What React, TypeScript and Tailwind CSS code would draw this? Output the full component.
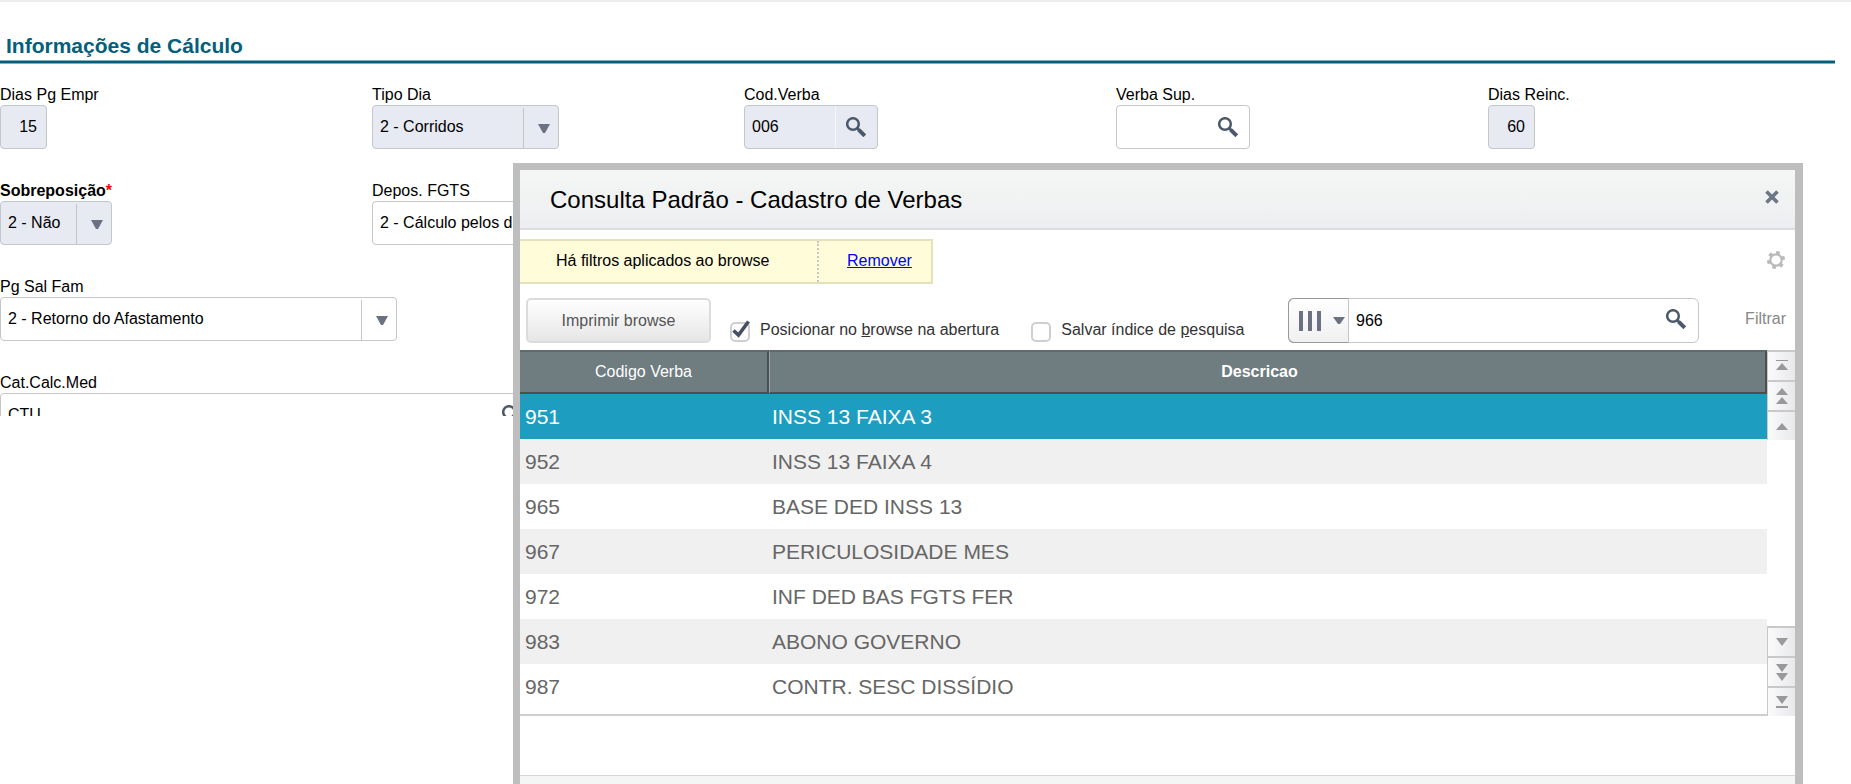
import React, { useState } from 'react';

interface Verba {
  codigo: string;
  descricao: string;
}

const VERBAS: Verba[] = [
  { codigo: '951', descricao: 'INSS 13 FAIXA 3' },
  { codigo: '952', descricao: 'INSS 13 FAIXA 4' },
  { codigo: '965', descricao: 'BASE DED INSS 13' },
  { codigo: '967', descricao: 'PERICULOSIDADE MES' },
  { codigo: '972', descricao: 'INF DED BAS FGTS FER' },
  { codigo: '983', descricao: 'ABONO GOVERNO' },
  { codigo: '987', descricao: 'CONTR. SESC DISSÍDIO' },
];

const SearchIcon = () => (
  <svg width="20" height="20" viewBox="0 0 20 20" fill="none" stroke="#4d586b" className="shrink-0">
    <circle cx="7" cy="7" r="5.8" strokeWidth="2.5" />
    <path d="M11 11L14 14" strokeWidth="3" />
    <path d="M12.8 12.8L18.8 18.8" strokeWidth="4" />
  </svg>
);

const GearIcon = () => (
  <svg width="18" height="18" viewBox="-9 -9 18 18" fill="none" stroke="#b9babd">
    <circle r="5.7" strokeWidth="2.2" />
    {[15, 75, 135, 195, 255, 315].map((a) => (
      <path key={a} d="M0 -6V-9" strokeWidth="3.8" transform={`rotate(${a})`} />
    ))}
  </svg>
);

const Field: React.FC<{ id: string; label: string; required?: boolean; children: React.ReactNode }> = ({ id, label, required, children }) => (
  <div>
    <label htmlFor={id} className={required ? 'block h-5 leading-5 font-bold' : 'block h-5 leading-5'}>
      {label}
      {required && <span className="text-[#f00]">*</span>}
    </label>
    {children}
  </div>
);

const SelectBox: React.FC<{ id: string; value: string; className: string }> = ({ id, value, className }) => (
  <div className={`relative flex h-[44px] rounded border border-[#c3c7c7] ${className}`}>
    <select id={id} className="w-full appearance-none bg-transparent pl-[7px] pr-9 outline-none">
      <option>{value}</option>
    </select>
    <div className="pointer-events-none absolute right-0 bottom-0 top-[2px] flex w-[35px] items-center justify-end border-l border-[#c3c7c7] pr-2">
      <svg width="12" height="9" viewBox="0 0 12 9" fill="#6b7183"><path d="M0 0H12L7 9H5Z" /></svg>
    </div>
  </div>
);

const LookupBox: React.FC<{ id: string; value: string; className: string; divider?: boolean }> = ({ id, value, className, divider }) => (
  <div className={`flex h-[44px] rounded border border-[#c3c7c7] ${className}`}>
    <input id={id} defaultValue={value} className="min-w-0 flex-1 bg-transparent pl-[7px] outline-none" />
    <button type="button" aria-label="Pesquisar" className={`flex w-[42px] items-center border-l pl-[10px] ${divider ? 'border-[#f5f6f9]' : 'border-transparent'}`}>
      <SearchIcon />
    </button>
  </div>
);

const NumberBox: React.FC<{ id: string; value: string }> = ({ id, value }) => (
  <input id={id} defaultValue={value} className="block h-[44px] w-[47px] rounded border border-[#c3c7c7] bg-[#e7eaf2] pr-[9px] text-right outline-none" />
);

const UP = 'M6 0L12 7H0Z';
const DOWN = 'M0 0H12L6 8Z';

const ScrollButton: React.FC<{ label: string; children: React.ReactNode }> = ({ label, children }) => (
  <button type="button" aria-label={label} className="flex h-[30px] w-full items-center justify-center border-l border-t-2 border-[#c9c9c9] bg-linear-to-r from-[#fafafb] to-[#e8e9ec]">
    <svg width="12" height="18" viewBox="0 0 12 18" fill="#999">{children}</svg>
  </button>
);

const CheckOption: React.FC<{ id: string; initial: boolean; children: React.ReactNode }> = ({ id, initial, children }) => {
  const [checked, setChecked] = useState(initial);

  return (
    <div className="flex items-start">
      <div className="relative mt-[2px] h-5 w-5">
        <input
          id={id}
          type="checkbox"
          checked={checked}
          onChange={() => setChecked(!checked)}
          className="block h-5 w-5 appearance-none rounded-[5px] border-2 border-[#cfcfcf] bg-white"
        />
        {checked && (
          <svg width="20" height="22" viewBox="0 0 20 22" fill="none" stroke="#475063" className="pointer-events-none absolute -top-[2px] left-0">
            <path d="M3.5 10.5L8.5 15L18.5 1.5" strokeWidth="3.6" />
          </svg>
        )}
      </div>
      <label htmlFor={id} className="pl-[10px] leading-5 whitespace-nowrap text-[#333]">{children}</label>
    </div>
  );
};

const CalculoForm = () => (
  <section className="max-h-[416px] overflow-hidden border-t-2 border-[#eee]">
    <div className="mr-4 pt-6">
      <h2 className="h-[34px] pl-[6px] text-[21px] leading-10 font-bold text-[#04607a]">Informações de Cálculo</h2>
      <div className="h-1 border-y border-[#7fb0bd] bg-[#04607a]" />
    </div>
    <div className="mt-[21px] grid grid-cols-[repeat(5,372px)] gap-y-8">
      <Field id="dias" label="Dias Pg Empr"><NumberBox id="dias" value="15" /></Field>
      <Field id="tipo" label="Tipo Dia"><SelectBox id="tipo" value="2 - Corridos" className="w-[187px] bg-[#e7eaf2]" /></Field>
      <Field id="cod" label="Cod.Verba"><LookupBox id="cod" value="006" className="w-[134px] bg-[#e7eaf2]" divider /></Field>
      <Field id="sup" label="Verba Sup."><LookupBox id="sup" value="" className="w-[134px]" /></Field>
      <Field id="reinc" label="Dias Reinc."><NumberBox id="reinc" value="60" /></Field>

      <Field id="sobre" label="Sobreposição" required><SelectBox id="sobre" value="2 - Não" className="w-[112px] bg-[#e7eaf2]" /></Field>
      <div className="col-span-4">
        <Field id="fgts" label="Depos. FGTS"><SelectBox id="fgts" value="2 - Cálculo pelos dias" className="w-[397px]" /></Field>
      </div>

      <div className="col-span-5">
        <Field id="salfam" label="Pg Sal Fam"><SelectBox id="salfam" value="2 - Retorno do Afastamento" className="w-[397px]" /></Field>
      </div>

      <div className="col-span-5">
        <Field id="cat" label="Cat.Calc.Med"><LookupBox id="cat" value="CTU" className="w-[534px]" /></Field>
      </div>
    </div>
  </section>
);

const VerbaTable = () => {
  const [selected, setSelected] = useState('951');

  return (
    <div className="flex">
      <div className="min-w-0 flex-1 border-b-2 border-[#cfcfcf]">
        <table className="w-full table-fixed border-separate border-spacing-0 text-[21px] text-[#666]">
          <thead>
            <tr className="h-[44px] bg-[#6f7c80] text-base text-white">
              <th className="w-[249px] border-y-2 border-r-2 border-[#4b5052] border-t-[#606a6d] p-0 font-normal">Codigo Verba</th>
              <th className="border-y-2 border-r-2 border-l border-[#4b5052] border-t-[#606a6d] border-l-[#9aa3a6] p-0 pr-4 font-bold">Descricao</th>
            </tr>
          </thead>
          <tbody>
            {VERBAS.map((v, i) => (
              <tr
                key={v.codigo}
                onClick={() => setSelected(v.codigo)}
                className={`h-[45px] ${v.codigo === selected ? 'bg-[#1d9dbf] text-white' : i % 2 ? 'bg-[#f0f0f0]' : 'bg-white'}`}
              >
                <td className="p-0 pl-[5px]">{v.codigo}</td>
                <td className="p-0 pl-[3px]">{v.descricao}</td>
              </tr>
            ))}
          </tbody>
        </table>
        <div className="h-[5px]" />
      </div>
      <div className="flex w-7 flex-col justify-between">
        <div>
          <ScrollButton label="Primeiro"><path d="M0 3H12V4H0Z" /><path d={UP} transform="translate(0 6)" /></ScrollButton>
          <ScrollButton label="Página anterior"><path d={UP} transform="translate(0 1)" /><path d={UP} transform="translate(0 10)" /></ScrollButton>
          <ScrollButton label="Anterior"><path d={UP} transform="translate(0 6)" /></ScrollButton>
        </div>
        <div>
          <ScrollButton label="Próximo"><path d={DOWN} transform="translate(0 5)" /></ScrollButton>
          <ScrollButton label="Próxima página"><path d={DOWN} transform="translate(0 1)" /><path d={DOWN} transform="translate(0 10)" /></ScrollButton>
          <ScrollButton label="Último"><path d={DOWN} transform="translate(0 3)" /><path d="M0 13H12V15H0Z" /></ScrollButton>
        </div>
      </div>
    </div>
  );
};

const ConsultaDialog = () => (
  <div role="dialog" aria-label="Consulta Padrão" className="absolute top-[163px] right-12 left-[513px] border-[7px] border-b-0 border-r-8 border-[#bebebe] bg-white">
    <header className="flex h-[60px] items-start justify-between border-b-2 border-[#dadcdf] bg-linear-to-b from-[#f4f7f5] to-[#edeef1] pr-4 pl-[30px]">
      <h1 className="text-2xl leading-[60px]">Consulta Padrão - Cadastro de Verbas</h1>
      <button type="button" aria-label="Fechar" className="pt-5">
        <svg width="14" height="14" viewBox="0 0 14 14" stroke="#6d7786" strokeWidth="3.6"><path d="M1.5 1.5L12.5 12.5M12.5 1.5L1.5 12.5" /></svg>
      </button>
    </header>

    <div className="mt-[9px] flex items-start justify-between pr-[10px]">
      <div className="flex h-[45px] w-[413px] items-stretch border-y-2 border-r-2 border-[#e2e2bd] bg-[#fffcda] leading-10">
        <span className="w-[299px] border-r-2 border-dotted border-[#c8c8c8] pl-9">Há filtros aplicados ao browse</span>
        <a href="#remover" className="pl-7 text-[#00f] underline">Remover</a>
      </div>
      <button type="button" aria-label="Configurar" className="pt-3"><GearIcon /></button>
    </div>

    <div className="mt-[14px] flex h-[52px] items-start">
      <button type="button" className="ml-[6px] h-[45px] w-[185px] shrink-0 rounded-[5px] border-2 border-[#dcdcdc] bg-linear-to-b from-white to-[#e6e6e6] text-[#555]">
        Imprimir browse
      </button>
      <div className="mt-[22px] ml-[19px] flex gap-8">
        <CheckOption id="posicionar" initial={true}>Posicionar no <u>b</u>rowse na abertura</CheckOption>
        <CheckOption id="salvar" initial={false}>Salvar índice de <u>p</u>esquisa</CheckOption>
      </div>
      <div className="ml-auto flex h-[45px] w-[411px] shrink-0 rounded-[6px] border border-[#c3c7c7]">
        <button type="button" aria-label="Índice de pesquisa" className="-my-px -ml-px flex w-[61px] items-center rounded-l-[6px] border border-[#999] border-r-[#c3c7c7] bg-linear-to-b from-white to-[#f0f0f1] pl-[10px]">
          <svg width="47" height="20" viewBox="0 0 47 20" fill="#6b7183">
            <path d="M0 0H4V20H0ZM9 0H13V20H9ZM18 0H22V20H18ZM34 6H46L41 13H39Z" />
          </svg>
        </button>
        <input aria-label="Pesquisar" defaultValue="966" className="min-w-0 flex-1 bg-transparent pl-[7px] outline-none" />
        <button type="button" aria-label="Buscar" className="w-8 pb-1"><SearchIcon /></button>
      </div>
      <button type="button" className="h-[42px] w-24 shrink-0 pr-[9px] text-right text-[#888]">Filtrar</button>
    </div>

    <VerbaTable />

    <footer className="mt-[59px] h-16 border-t border-[#d6d6d6] bg-[#f4f6f5]" />
  </div>
);

export default function App() {
  return (
    <main className="relative h-screen overflow-hidden bg-white font-['Liberation_Sans',Arial,sans-serif] text-base text-black">
      <CalculoForm />
      <ConsultaDialog />
    </main>
  );
}
